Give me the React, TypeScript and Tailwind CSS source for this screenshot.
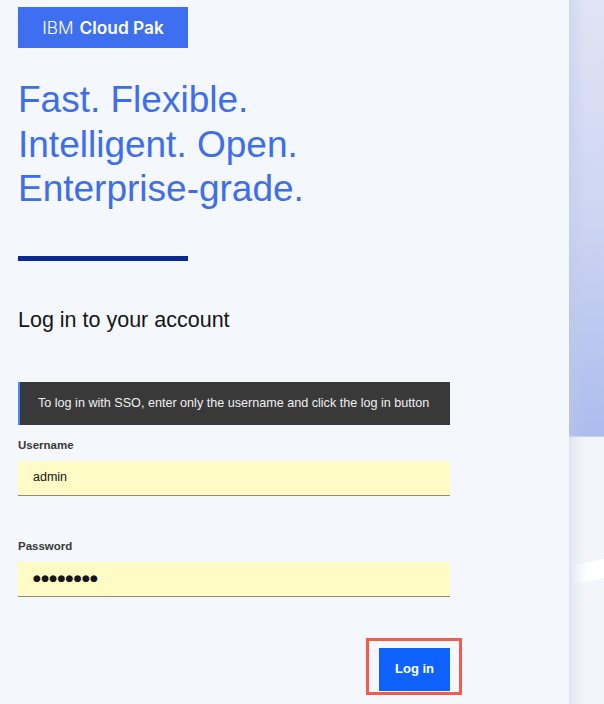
import React from "react";

const sans = { fontFamily: '"Liberation Sans", Arial, sans-serif' };

function RightArt() {
  return (
    <div className="flex-1 flex flex-col">
      <div className="h-[436px] bg-[linear-gradient(180deg,#e1e4f5_0%,#cdd5f2_50%,#adbcee_100%)] relative">
        <div className="absolute inset-y-0 left-0 w-[16px] bg-[linear-gradient(90deg,rgba(190,200,230,0.45),rgba(190,200,230,0))]" />
      </div>
      <div className="h-px bg-[#c9d3f1]" />
      <div className="flex-1 relative bg-[#f3f5fb] overflow-hidden">
        <svg className="absolute inset-0 w-full h-full" viewBox="0 0 35 267" preserveAspectRatio="none">
          <defs>
            <linearGradient id="shade" x1="0" x2="1" y1="0" y2="0">
              <stop offset="0" stopColor="#dfe4f0" />
              <stop offset="0.6" stopColor="#f3f5fb" stopOpacity="0" />
            </linearGradient>
          </defs>
          <polygon points="0,129 35,122 35,141 0,148" fill="#ffffff" />
          <rect x="0" y="0" width="35" height="267" fill="url(#shade)" />
        </svg>
      </div>
    </div>
  );
}

export default function App() {
  return (
    <div className="w-[604px] h-[704px] flex bg-[#f4f7fc] overflow-hidden" style={sans}>
      <div className="w-[569px] shrink-0 pl-[18px] pt-[7px] relative">
        <div className="w-[170px] h-[41px] bg-[#3e6ff0] flex items-center justify-center text-white text-[17.3px]" style={{ fontFamily: 'Inter, "Noto Sans", sans-serif' }}>
          <span className="font-light">IBM</span>
          <span className="font-semibold ml-[6px]">Cloud Pak</span>
        </div>
        <h1 className="mt-[30px] text-[37px] leading-[44.5px] text-[#3e6ee9] font-normal">
          <div>Fast. Flexible.</div>
          <div>Intelligent. Open.</div>
          <div>Enterprise-grade.</div>
        </h1>
        <div className="mt-[44px] w-[170px] h-[5px] bg-[#0b2a8f]" />
        <h2 className="mt-[45px] text-[21.5px] leading-[28px] text-[#161616]">Log in to your account</h2>
        <div className="w-[432px]">
          <div className="mt-[48px] h-[43px] bg-[#393939] border-l-2 border-[#4589ff] flex items-center pl-[18px] text-[12.6px] text-[#f0f0f0]">
            To log in with SSO, enter only the username and click the log in button
          </div>
          <div className="mt-[12px] text-[11.5px] leading-[16px] font-bold text-[#393939]">Username</div>
          <div className="mt-[8px] h-[35px] bg-[#fefbc6] border-b border-[#978a6d] flex items-center pl-[15px] text-[12.5px] text-[#161616]">
            admin
          </div>
          <div className="mt-[42px] text-[11.5px] leading-[16px] font-bold text-[#393939]">Password</div>
          <div className="mt-[8px] h-[35px] bg-[#fefbc6] border-b border-[#978a6d] flex items-center pl-[15px] text-[9px] tracking-[0.3px] text-[#161616]" style={{ fontFamily: '"DejaVu Sans", sans-serif' }}>
            ●●●●●●●●
          </div>
          <div className="mt-[51px] flex justify-end">
            <button className="w-[71px] h-[43px] bg-[#0f62fe] text-white text-[13px] font-bold">Log in</button>
          </div>
        </div>
        <div className="absolute left-[366px] top-[638px] w-[96px] h-[57px] border-[3px] border-[#f25b4d] pointer-events-none" />
      </div>
      <RightArt />
    </div>
  );
}
